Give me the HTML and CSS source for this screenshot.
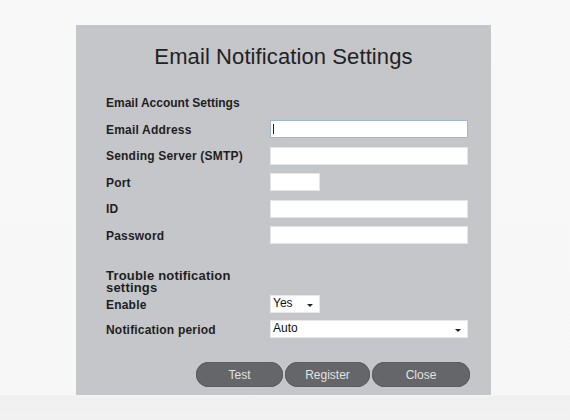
FILE: index.html
```html
<!DOCTYPE html>
<html>
<head>
<meta charset="utf-8">
<link rel="stylesheet" href="styles.css">
</head>
<body>
<div class="page">
  <div class="panel">
    <h1 class="title">Email Notification Settings</h1>
    <div class="section-head">Email Account Settings</div>
    <div class="rows">
      <div class="row"><span class="label">Email Address</span><div class="field wide focused"><span class="caret"></span></div></div>
      <div class="row"><span class="label">Sending Server (SMTP)</span><div class="field wide"></div></div>
      <div class="row"><span class="label">Port</span><div class="field short"></div></div>
      <div class="row"><span class="label">ID</span><div class="field wide"></div></div>
      <div class="row"><span class="label">Password</span><div class="field wide"></div></div>
    </div>
    <div class="section-head2">Trouble notification settings</div>
    <div class="rows2">
      <div class="row"><span class="label">Enable</span><div class="select short"><span class="val">Yes</span><span class="arrow"></span></div></div>
      <div class="row"><span class="label">Notification period</span><div class="select wide"><span class="val">Auto</span><span class="arrow"></span></div></div>
    </div>
    <div class="buttons">
      <button class="btn b-test">Test</button>
      <button class="btn b-reg">Register</button>
      <button class="btn b-close">Close</button>
    </div>
  </div>
</div>
</body>
</html>
```

FILE: styles.css
```css
html, body {
  margin: 0;
  padding: 0;
}
body {
  width: 570px;
  height: 420px;
  background: linear-gradient(to bottom, #f8f8f8 0, #f7f7f7 395px, #f0f0f0 396px, #f1f1f1 420px);
  font-family: "Liberation Sans", Arial, sans-serif;
  overflow: hidden;
}
.page {
  padding: 25px 0 0 76px;
}
.panel {
  box-sizing: border-box;
  width: 415px;
  height: 370px;
  background: #c5c6ca;
  padding: 20px 21px 0 30px;
  color: #1e1e1e;
}
.title {
  margin: 0 -21px 0 -30px;
  font-weight: normal;
  font-size: 22px;
  line-height: 24px;
  text-align: center;
  color: #222;
  letter-spacing: 0.1px;
}
.section-head {
  margin-top: 26px;
  font-size: 12px;
  font-weight: bold;
  line-height: 16px;
}
.rows {
  margin-top: 9px;
  display: flex;
  flex-direction: column;
  gap: 8.5px;
}
.row {
  display: flex;
  align-items: center;
  height: 18px;
}
.label {
  width: 164px;
  flex: none;
  font-size: 12px;
  font-weight: bold;
  letter-spacing: 0.2px;
  padding-top: 1px;
}
.field, .select {
  box-sizing: border-box;
  height: 18px;
  background: #fff;
  border: 1px solid #e4e5e8;
  position: relative;
}
.wide { width: 198px; }
.short { width: 50px; }
.focused {
  border-color: #9fb8d2;
}
.caret {
  position: absolute;
  left: 2px;
  top: 3px;
  width: 1px;
  height: 10px;
  background: #222;
}
.section-head2 {
  margin-top: 25.5px;
  width: 160px;
  font-size: 13px;
  font-weight: bold;
  line-height: 12.5px;
  letter-spacing: 0.2px;
}
.rows2 {
  margin-top: 0.5px;
  display: flex;
  flex-direction: column;
  gap: 7px;
}
.select {
  display: flex;
  align-items: center;
  justify-content: space-between;
  padding: 0 6px 0 2px;
  border-color: #e8e8ea;
}
.val {
  font-size: 12px;
  color: #111;
  line-height: 14px;
  margin-top: -2px;
}
.arrow {
  width: 0;
  height: 0;
  border-left: 3px solid transparent;
  border-right: 3px solid transparent;
  border-top: 3px solid #222;
  margin-top: 2px;
}
.buttons {
  margin-top: 24px;
  display: flex;
  justify-content: flex-end;
  gap: 2px;
}
.btn {
  height: 25px;
  border: none;
  border-radius: 13px;
  background: #64666a;
  color: #e2e2e2;
  font-family: "Liberation Sans", Arial, sans-serif;
  font-size: 12px;
  padding: 0;
  box-shadow: inset 0 0 0 1px #5a5c60;
}
.b-test { width: 87px; }
.b-reg { width: 85px; }
.b-close { width: 98px; }
```
